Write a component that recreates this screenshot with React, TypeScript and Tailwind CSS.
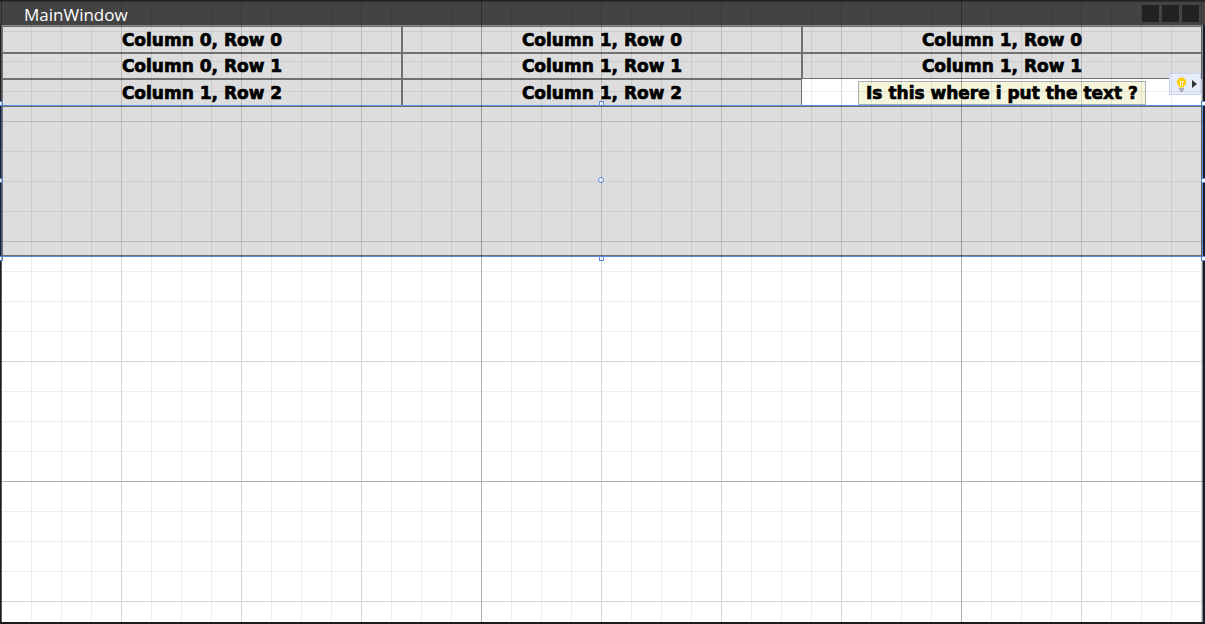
import React from "react";

const rows = [
  { height: "h-[27px]", cells: ["Column 0, Row 0", "Column 1, Row 0", "Column 1, Row 0"] },
  { height: "h-[26px]", cells: ["Column 0, Row 1", "Column 1, Row 1", "Column 1, Row 1"] },
  { height: "h-[27px]", cells: ["Column 1, Row 2", "Column 1, Row 2"] },
];

const label =
  "font-['Arial_Black','DejaVu_Sans',sans-serif] text-[17px] font-bold leading-6 text-black [-webkit-text-stroke:0.7px_black]";

function GridLines() {
  return (
    <svg className="pointer-events-none absolute inset-0 h-full w-full" aria-hidden="true" shapeRendering="crispEdges">
      <defs>
        <pattern id="minor" x="1" y="1" width="30" height="30" patternUnits="userSpaceOnUse">
          <path d="M0 0h30v1H1v29H0z" fill="#000" fillOpacity="0.07" />
        </pattern>
        <pattern id="medium" x="1" y="1" width="120" height="120" patternUnits="userSpaceOnUse">
          <path d="M0 0h120v1H1v119H0z" fill="#000" fillOpacity="0.1" />
        </pattern>
        <pattern id="major" x="1" y="1" width="480" height="480" patternUnits="userSpaceOnUse">
          <path d="M0 0h480v1H1v479H0z" fill="#000" fillOpacity="0.18" />
        </pattern>
      </defs>
      <rect width="100%" height="100%" fill="url(#minor)" />
      <rect width="100%" height="100%" fill="url(#medium)" />
      <rect width="100%" height="100%" fill="url(#major)" />
    </svg>
  );
}

function Handle({ place }: { place: string }) {
  return <span className={`absolute size-[5px] border border-[#5b8de0] bg-white ${place}`} />;
}

function Selection() {
  return (
    <div className="pointer-events-none absolute -inset-px border border-[#5b8de0]">
      <Handle place="-top-[5px] left-1/2 -translate-x-[3px]" />
      <Handle place="-bottom-[5px] left-1/2 -translate-x-[3px]" />
      <Handle place="-top-[5px] -left-1" />
      <Handle place="-top-[5px] -right-1" />
      <Handle place="-bottom-[5px] -left-1" />
      <Handle place="-bottom-[5px] -right-1" />
      <Handle place="top-1/2 -left-1 -translate-y-[3px]" />
      <Handle place="top-1/2 -right-1 -translate-y-[3px]" />
      <span className="absolute top-1/2 left-1/2 size-[6px] -translate-1 rounded-full border border-[#5b8de0] bg-white" />
    </div>
  );
}

function Hint() {
  return (
    <button
      type="button"
      aria-label="Quick actions"
      className="absolute -top-1.5 right-px flex h-[22px] w-8 items-center justify-end gap-[5px] border border-[#ccd5f0] bg-[#e6ecfc] pr-[3px]"
    >
      <svg width="11" height="15" viewBox="0 0 11 15" aria-hidden="true">
        <path
          d="M5.5 0.500a4.700 4.700 0 0 0-4.700 4.700c0 1.800 1.500 2.800 2.200 4v1.300h5V9.200c.7-1.200 2.200-2.200 2.200-4A4.700 4.700 0 0 0 5.500.5z"
          fill="#ffcc00"
        />
        <path d="M3 4.500h5M4.500 4.500v5M6.500 4.500v5" stroke="#fff3c0" strokeWidth="1" fill="none" />
        <path d="M3 12h5M4 14h3" stroke="#777" strokeWidth="1" />
      </svg>
      <svg width="5" height="8" viewBox="0 0 5 8" aria-hidden="true">
        <path d="M0 0l5 4-5 4z" fill="#333" />
      </svg>
    </button>
  );
}

export default function App() {
  return (
    <div className="relative flex min-h-screen flex-col overflow-hidden border-b-2 border-[#1c1c1e] bg-[#434343]">
      <header className="flex h-[25px] items-center justify-between border-t border-[#222] pr-1.5 pl-6">
        <h1 className="pt-[3px] font-['Open_Sans',sans-serif] text-[17px] leading-6 text-white">MainWindow</h1>
        <div className="flex gap-[3px]">
          <button type="button" aria-label="Minimize" className="size-[17px] bg-[#222]" />
          <button type="button" aria-label="Maximize" className="size-[17px] bg-[#222]" />
          <button type="button" aria-label="Close" className="size-[17px] bg-[#222]" />
        </div>
      </header>
      <main className="flex grow flex-col border-r-2 border-l border-[#1b1d26] bg-white">
        <div className="grow border border-b-0 border-[#85888d]">
          {rows.map((row, r) => (
            <div key={r} className={`grid grid-cols-3 ${row.height}`}>
              {row.cells.map((text, c) => (
                <button key={c} type="button" className={`flex items-center justify-center border border-[#707070] bg-[#dddddd] ${label}`}>
                  {text}
                </button>
              ))}
              {row.cells.length < 3 && (
                <div className="relative flex items-center justify-center">
                  <input
                    type="text"
                    aria-label="Message"
                    defaultValue="Is this where i put the text ?"
                    className={`h-6 w-72 border border-[#abadb3] bg-[#f5f5dc] text-center ${label}`}
                  />
                  <Hint />
                </div>
              )}
            </div>
          ))}
          <div className="relative h-[150px]">
            <button type="button" aria-label="Empty row" className="h-full w-full border border-[#707070] bg-[#dddddd]" />
            <Selection />
          </div>
        </div>
      </main>
      <GridLines />
    </div>
  );
}
